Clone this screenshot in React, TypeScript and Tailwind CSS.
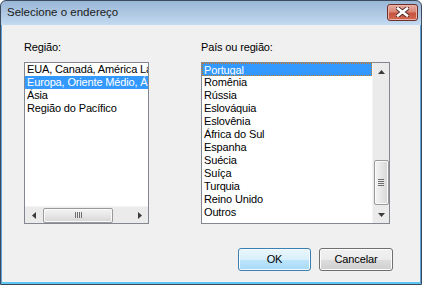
import React from 'react';

const regions = [
  'EUA, Canadá, América Latina',
  'Europa, Oriente Médio, África',
  'Ásia',
  'Região do Pacífico',
];

const countries = [
  'Portugal',
  'Romênia',
  'Rússia',
  'Eslováquia',
  'Eslovênia',
  'África do Sul',
  'Espanha',
  'Suécia',
  'Suíça',
  'Turquia',
  'Reino Unido',
  'Outros',
];

function Arrow({ dir }: { dir: 'up' | 'down' | 'left' | 'right' }) {
  const pts = {
    up: '0,4 3.5,0 7,4',
    down: '0,0 7,0 3.5,4',
    left: '4,0 4,7 0,3.5',
    right: '0,0 0,7 4,3.5',
  }[dir];
  const vertical = dir === 'up' || dir === 'down';
  return (
    <svg
      width={vertical ? 7 : 4}
      height={vertical ? 4 : 7}
      viewBox={vertical ? '0 0 7 4' : '0 0 4 7'}
    >
      <polygon points={pts} fill="#3b3b3b" />
    </svg>
  );
}

function HScrollBar() {
  return (
    <div className="flex h-[17px] w-full bg-[#ebebeb] border-t border-[#f4f4f4]">
      <div className="w-[17px] flex items-center justify-center">
        <Arrow dir="left" />
      </div>
      <div className="flex-1 flex items-center">
        <div className="ml-[1px] w-[70px] h-[15px] rounded-[2px] border border-[#9a9a9a] bg-[linear-gradient(#f4f4f4,#e6e6e6_50%,#d6d6d6)] shadow-[inset_0_0_0_1px_#fafafa] flex items-center justify-center gap-[1px]">
          <div className="w-[1px] h-[6px] bg-[#6e6e6e]" />
          <div className="w-[1px] h-[6px] bg-[#6e6e6e]" />
          <div className="w-[1px] h-[6px] bg-[#6e6e6e]" />
          <div className="w-[1px] h-[6px] bg-[#6e6e6e]" />
        </div>
      </div>
      <div className="w-[17px] flex items-center justify-center">
        <Arrow dir="right" />
      </div>
    </div>
  );
}

function VScrollBar() {
  return (
    <div className="flex flex-col w-[17px] h-full bg-[#ebebeb] border-l border-[#f4f4f4]">
      <div className="h-[17px] flex items-center justify-center">
        <Arrow dir="up" />
      </div>
      <div className="flex-1 flex flex-col justify-end items-center pb-[1px]">
        <div className="w-[15px] h-[45px] rounded-[2px] border border-[#9a9a9a] bg-[linear-gradient(90deg,#f4f4f4,#e6e6e6_50%,#d6d6d6)] shadow-[inset_0_0_0_1px_#fafafa] flex flex-col items-center justify-center gap-[1px]">
          <div className="w-[6px] h-[1px] bg-[#6e6e6e]" />
          <div className="w-[6px] h-[1px] bg-[#6e6e6e]" />
          <div className="w-[6px] h-[1px] bg-[#6e6e6e]" />
          <div className="w-[6px] h-[1px] bg-[#6e6e6e]" />
        </div>
      </div>
      <div className="h-[17px] flex items-center justify-center">
        <Arrow dir="down" />
      </div>
    </div>
  );
}

export default function App() {
  return (
    <div
      className="w-[422px] h-[285px] flex flex-col rounded-t-[6px] border border-[#3b4a5c] overflow-hidden bg-[linear-gradient(#9ab6d6,#c3daf0_24px)] text-[11px] tracking-[-0.15px] text-black"
      style={{ fontFamily: '"Liberation Sans", Arial, sans-serif' }}
    >
      <div className="h-[24px] flex items-center justify-between pl-[6px] pr-[3px]">
        <span className="text-[11.5px] tracking-normal text-[#1b1b1b]">Selecione o endereço</span>
        <div className="mt-[-2px] w-[31px] h-[17px] rounded-[3px] border border-[#6e2f2a] bg-[linear-gradient(#e9ada2,#d98676_45%,#c8533f_55%,#d26b52)] shadow-[inset_0_0_0_1px_#eab3a8] flex items-center justify-center">
          <svg width="13" height="10" viewBox="0 0 13 10">
            <path d="M2 1.5 L11 8.5 M11 1.5 L2 8.5" stroke="#4a2a28" strokeWidth="4.4" strokeLinecap="square" />
            <path d="M2 1.5 L11 8.5 M11 1.5 L2 8.5" stroke="#ffffff" strokeWidth="2.6" strokeLinecap="square" />
          </svg>
        </div>
      </div>

      <div className="flex-1 flex flex-col bg-[#f0f0f0] border-l border-r border-[#5ba2d8] border-b-2 border-b-[#5ec6ef] pt-[16px] pl-[22px]">
        <div className="flex gap-[52px]">
          <div className="flex flex-col w-[125px]">
            <div className="leading-[13px] mb-[8px]">Região:</div>
            <div className="h-[162px] border border-[#828790] bg-white flex flex-col">
              <div className="flex-1">
                {regions.map((r, i) => (
                  <div
                    key={r}
                    className={
                      'h-[13px] leading-[13px] pl-[2px] whitespace-nowrap overflow-hidden ' +
                      (i === 1 ? 'bg-[#3399ff] text-white' : '')
                    }
                  >
                    {r}
                  </div>
                ))}
              </div>
              <HScrollBar />
            </div>
          </div>

          <div className="flex flex-col w-[189px]">
            <div className="leading-[13px] mb-[8px]">País ou região:</div>
            <div className="h-[162px] border border-[#828790] bg-white flex">
              <div className="flex-1">
                {countries.map((c, i) => (
                  <div
                    key={c}
                    className={
                      'h-[13px] leading-[13px] whitespace-nowrap overflow-hidden ' +
                      (i === 0
                        ? 'bg-[#3399ff] text-white border border-dotted border-[#cc7a1f] pl-[1px] leading-[11px]'
                        : 'pl-[2px]')
                    }
                  >
                    {c}
                  </div>
                ))}
              </div>
              <VScrollBar />
            </div>
          </div>
        </div>

        <div className="flex justify-end gap-[8px] mt-[24px] pr-[27px]">
          <button className="w-[73px] h-[23px] rounded-[3px] border border-[#3c7fb1] bg-[linear-gradient(#eaf6fd,#d9f0fc_50%,#bee6fd_50%,#a7d9f5)] shadow-[inset_0_0_0_1px_#f4fbff] text-[11px] text-black">
            OK
          </button>
          <button className="w-[74px] h-[23px] rounded-[3px] border border-[#707070] bg-[linear-gradient(#f2f2f2,#ebebeb_50%,#dddddd_50%,#cfcfcf)] shadow-[inset_0_0_0_1px_#fcfcfc] text-[11px] text-black">
            Cancelar
          </button>
        </div>
      </div>
    </div>
  );
}
